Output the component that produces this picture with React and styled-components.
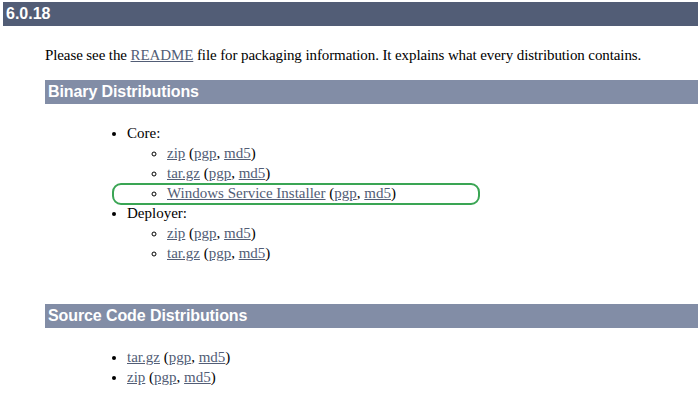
import styled, { createGlobalStyle } from "styled-components";

const GlobalStyle = createGlobalStyle`
  body {
    margin: 0;
    background: #fff;
    font-family: "Liberation Serif", "Times New Roman", serif;
    font-size: 15px;
    color: #000;
  }
`;

const Page = styled.div`
  padding: 2px 0 0 3px;
`;

const TitleBar = styled.h2`
  margin: 0;
  height: 24px;
  line-height: 24px;
  background: #525d76;
  color: #fff;
  font-family: "Liberation Sans", Arial, sans-serif;
  font-size: 16px;
  font-weight: bold;
  padding-left: 3px;
`;

const Body = styled.div`
  margin-left: 42px;
`;

const Intro = styled.p`
  margin: 19px 0 15px;
  line-height: 20px;
  letter-spacing: -0.1px;
`;

const SectionBar = styled.h3`
  margin: ${(p) => p.$top || 0}px 0 0;
  height: 24px;
  line-height: 24px;
  background: #828da6;
  color: #fff;
  font-family: "Liberation Sans", Arial, sans-serif;
  font-size: 16px;
  font-weight: bold;
  padding-left: 3px;
  letter-spacing: -0.1px;
`;

const List = styled.ul`
  margin: ${(p) => (p.$nested ? 0 : "19px 0 0")};
  padding-left: ${(p) => (p.$nested ? 40 : 82)}px;
  list-style-type: ${(p) => (p.$nested ? "circle" : "disc")};
  line-height: 20px;
`;

const Item = styled.li`
  position: relative;
  &::before {
    content: ${(p) => (p.$marked ? '""' : "none")};
    position: absolute;
    left: -55px;
    top: 0;
    width: 368px;
    height: 22px;
    box-sizing: border-box;
    border: 2px solid #3aa554;
    border-radius: 9px;
  }
`;

const Link = styled.a`
  color: #525d76;
  text-decoration: underline;
`;

const Files = ({ name }) => (
  <>
    <Link href="#">{name}</Link> (<Link href="#">pgp</Link>,{" "}
    <Link href="#">md5</Link>)
  </>
);

const App = () => (
  <Page>
    <GlobalStyle />
    <TitleBar>6.0.18</TitleBar>
    <Body>
      <Intro>
        Please see the <Link href="#">README</Link> file for packaging
        information. It explains what every distribution contains.
      </Intro>
      <SectionBar>Binary Distributions</SectionBar>
      <List>
        <li>
          Core:
          <List $nested>
            <Item>
              <Files name="zip" />
            </Item>
            <Item>
              <Files name="tar.gz" />
            </Item>
            <Item $marked>
              <Files name="Windows Service Installer" />
            </Item>
          </List>
        </li>
        <li>
          Deployer:
          <List $nested>
            <Item>
              <Files name="zip" />
            </Item>
            <Item>
              <Files name="tar.gz" />
            </Item>
          </List>
        </li>
      </List>
      <SectionBar $top={41}>Source Code Distributions</SectionBar>
      <List>
        <Item>
          <Files name="tar.gz" />
        </Item>
        <Item>
          <Files name="zip" />
        </Item>
      </List>
    </Body>
  </Page>
);

export default App;
